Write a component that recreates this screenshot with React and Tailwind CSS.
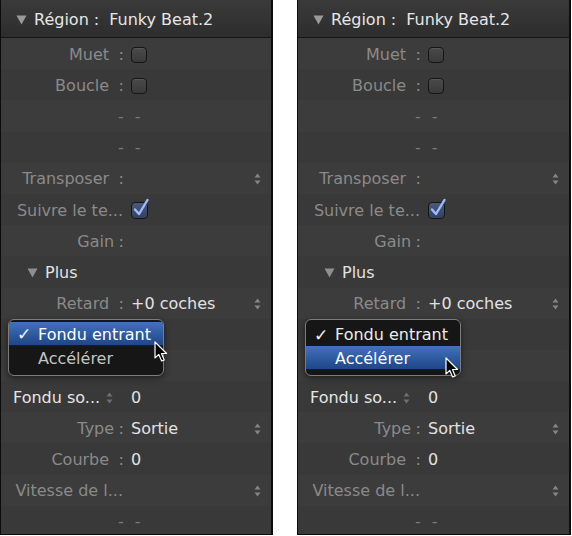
const FONT = { fontFamily: '"DejaVu Sans", "Liberation Sans", sans-serif' };

const ROWS = [
  { label: "Muet", gap: "mr-[9.5px]", colon: true, check: "off" },
  { label: "Boucle", gap: "mr-[9.5px]", colon: true, check: "off" },
  { dashes: true },
  { dashes: true },
  { label: "Transposer", gap: "mr-[9.5px]", colon: true, stepper: true },
  { label: "Suivre le te...", noColon: true, check: "on" },
  { label: "Gain", gap: "mr-[4.5px]", colon: true },
  { plus: true },
  { label: "Retard", gap: "mr-[9.5px]", colon: true, value: "+0 coches", stepper: true },
  { empty: true },
  { empty: true },
  { fondu: true },
  { label: "Type", gap: "mr-[4.5px]", colon: true, value: "Sortie", stepper: true },
  { label: "Courbe", gap: "mr-[9.5px]", colon: true, value: "0" },
  { label: "Vitesse de l...", noColon: true, stepper: true },
  { dashes: true },
];

function Stepper({ dim }) {
  return (
    <svg width="7" height="12" viewBox="0 0 7 12" className={dim ? "text-[#6f6f6f]" : "text-[#858585]"}>
      <path d="M3.5 0.5 L6.5 4.5 L0.5 4.5 Z" fill="currentColor" />
      <path d="M3.5 11.5 L6.5 7.5 L0.5 7.5 Z" fill="currentColor" />
    </svg>
  );
}

function Checkbox({ on }) {
  if (!on) {
    return (
      <div className="h-[16px] w-[16px] rounded-[4px] border border-[#151515] bg-gradient-to-b from-[#4a4a4a] to-[#3a3a3a] shadow-[inset_0_1px_0_rgba(255,255,255,0.08)]" />
    );
  }
  return (
    <div className="relative h-[17px] w-[17px] rounded-[4px] border border-[#151515] bg-gradient-to-b from-[#4a5a7c] to-[#33415e]">
      <svg width="18" height="20" viewBox="0 0 18 20" className="absolute left-[0px] top-[-5px]">
        <path d="M3 11.5 L7 16 L15.5 2" fill="none" stroke="#9cbcff" strokeWidth="2.4" strokeLinecap="round" strokeLinejoin="round" />
      </svg>
    </div>
  );
}

function Triangle({ className }) {
  return (
    <svg width="11" height="10" viewBox="0 0 11 10" className={className}>
      <path d="M0.5 0.5 L10.5 0.5 L5.5 9.5 Z" fill="currentColor" />
    </svg>
  );
}

function Row({ row, index }) {
  const bg = index % 2 === 0 ? "bg-[#3c3c3c]" : "bg-[#393939]";

  if (row.dashes) {
    return (
      <div className={`flex h-[31.2px] shrink-0 items-center pl-[117px] pt-[2px] text-[#7a7a7a] ${bg}`}>
        <span className="tracking-[3px]">- -</span>
      </div>
    );
  }

  if (row.empty) {
    return <div className={`h-[31.2px] shrink-0 ${bg}`} />;
  }

  if (row.plus) {
    return (
      <div className={`flex h-[31.2px] shrink-0 items-center pt-[2px] ${bg}`}>
        <Triangle className="ml-[26px] text-[#8f8f8f]" />
        <span className="ml-[7px] text-[#e2e2e2]">Plus</span>
      </div>
    );
  }

  if (row.fondu) {
    return (
      <div className={`flex h-[31.2px] shrink-0 items-center pt-[2px] ${bg}`}>
        <div className="flex w-[123px] items-center">
          <span className="ml-[12px] text-[#e6e6e6]">Fondu so...</span>
          <span className="ml-[6px]">
            <Stepper dim />
          </span>
        </div>
        <span className="ml-[7px] text-[#e2e2e2]">0</span>
      </div>
    );
  }

  return (
    <div className={`flex h-[31.2px] shrink-0 items-center pt-[2px] ${bg}`}>
      <div className="flex w-[123px] items-center justify-end">
        <span className={`whitespace-nowrap text-[#8a8a8a] ${row.noColon ? "mr-[1px]" : row.gap}`}>
          {row.label}
        </span>
        {row.colon && <span className="text-[#8a8a8a]">:</span>}
      </div>
      <div className="ml-[7px] flex items-center">
        {row.check && <Checkbox on={row.check === "on"} />}
        {row.value && <span className="text-[#e2e2e2]">{row.value}</span>}
      </div>
      {row.stepper && (
        <div className="ml-auto mr-[10px] flex items-center">
          <Stepper />
        </div>
      )}
    </div>
  );
}

function Cursor({ className }) {
  return (
    <svg width="14" height="22" viewBox="0 0 14 22" className={className}>
      <path
        d="M1 1 L1 17 L4.8 13.4 L7.6 20 L10.2 18.9 L7.5 12.5 L12.6 12.5 Z"
        fill="#000"
        stroke="#fff"
        strokeWidth="1.2"
        strokeLinejoin="round"
      />
    </svg>
  );
}

function PopupMenu({ selected, className }) {
  const items = ["Fondu entrant", "Accélérer"];
  return (
    <div className={`absolute h-[57px] w-[156px] overflow-hidden rounded-[6px] border border-[#7c7c7c] bg-[#161616] pt-[2px] shadow-[0_2px_6px_rgba(0,0,0,0.5)] ${className}`}>
      {items.map((item, i) => {
        const active = selected === i;
        return (
          <div
            key={item}
            className={`flex h-[24px] items-center pt-[2px] ${
              active
                ? "border-b border-[#0e1e3c] bg-gradient-to-b from-[#4272bd] to-[#1f4688] text-white"
                : i === 0
                ? "text-[#ececec]"
                : "text-[#c4c4c4]"
            }`}
          >
            <span className="w-[29px] pl-[8px] text-[17px] font-bold text-[#f2f2f2]">{i === 0 ? "✓" : ""}</span>
            <span>{item}</span>
          </div>
        );
      })}
    </div>
  );
}

function Panel({ selected, cursorClass, menuClass, className }) {
  return (
    <div className={`relative flex h-[535px] flex-col overflow-hidden border-b border-l border-r-2 border-[#0c0c0c] ${className}`}>
      <div className="flex h-[38px] shrink-0 items-center border-b border-[#161616] bg-gradient-to-b from-[#3a3a3a] to-[#2d2d2d] pt-[2px]">
        <Triangle className="ml-[15px] text-[#9a9a9a]" />
        <span className="ml-[7px] text-[#e6e6e6]">Région :</span>
        <span className="ml-[10px] text-[#e6e6e6]">Funky Beat.2</span>
      </div>
      {ROWS.map((row, i) => (
        <Row key={i} row={row} index={i} />
      ))}
      <PopupMenu selected={selected} className={menuClass} />
      <Cursor className={`absolute ${cursorClass}`} />
    </div>
  );
}

export default function App() {
  return (
    <div className="flex h-[536px] w-[572px] bg-white text-[16px] leading-none" style={FONT}>
      <Panel
        selected={0}
        className="w-[273px]"
        menuClass="left-[7px] top-[319px]"
        cursorClass="left-[153px] top-[341px]"
      />
      <Panel
        selected={1}
        className="ml-[24px] w-[274px]"
        menuClass="left-[7px] top-[319px]"
        cursorClass="left-[147px] top-[357px]"
      />
    </div>
  );
}
